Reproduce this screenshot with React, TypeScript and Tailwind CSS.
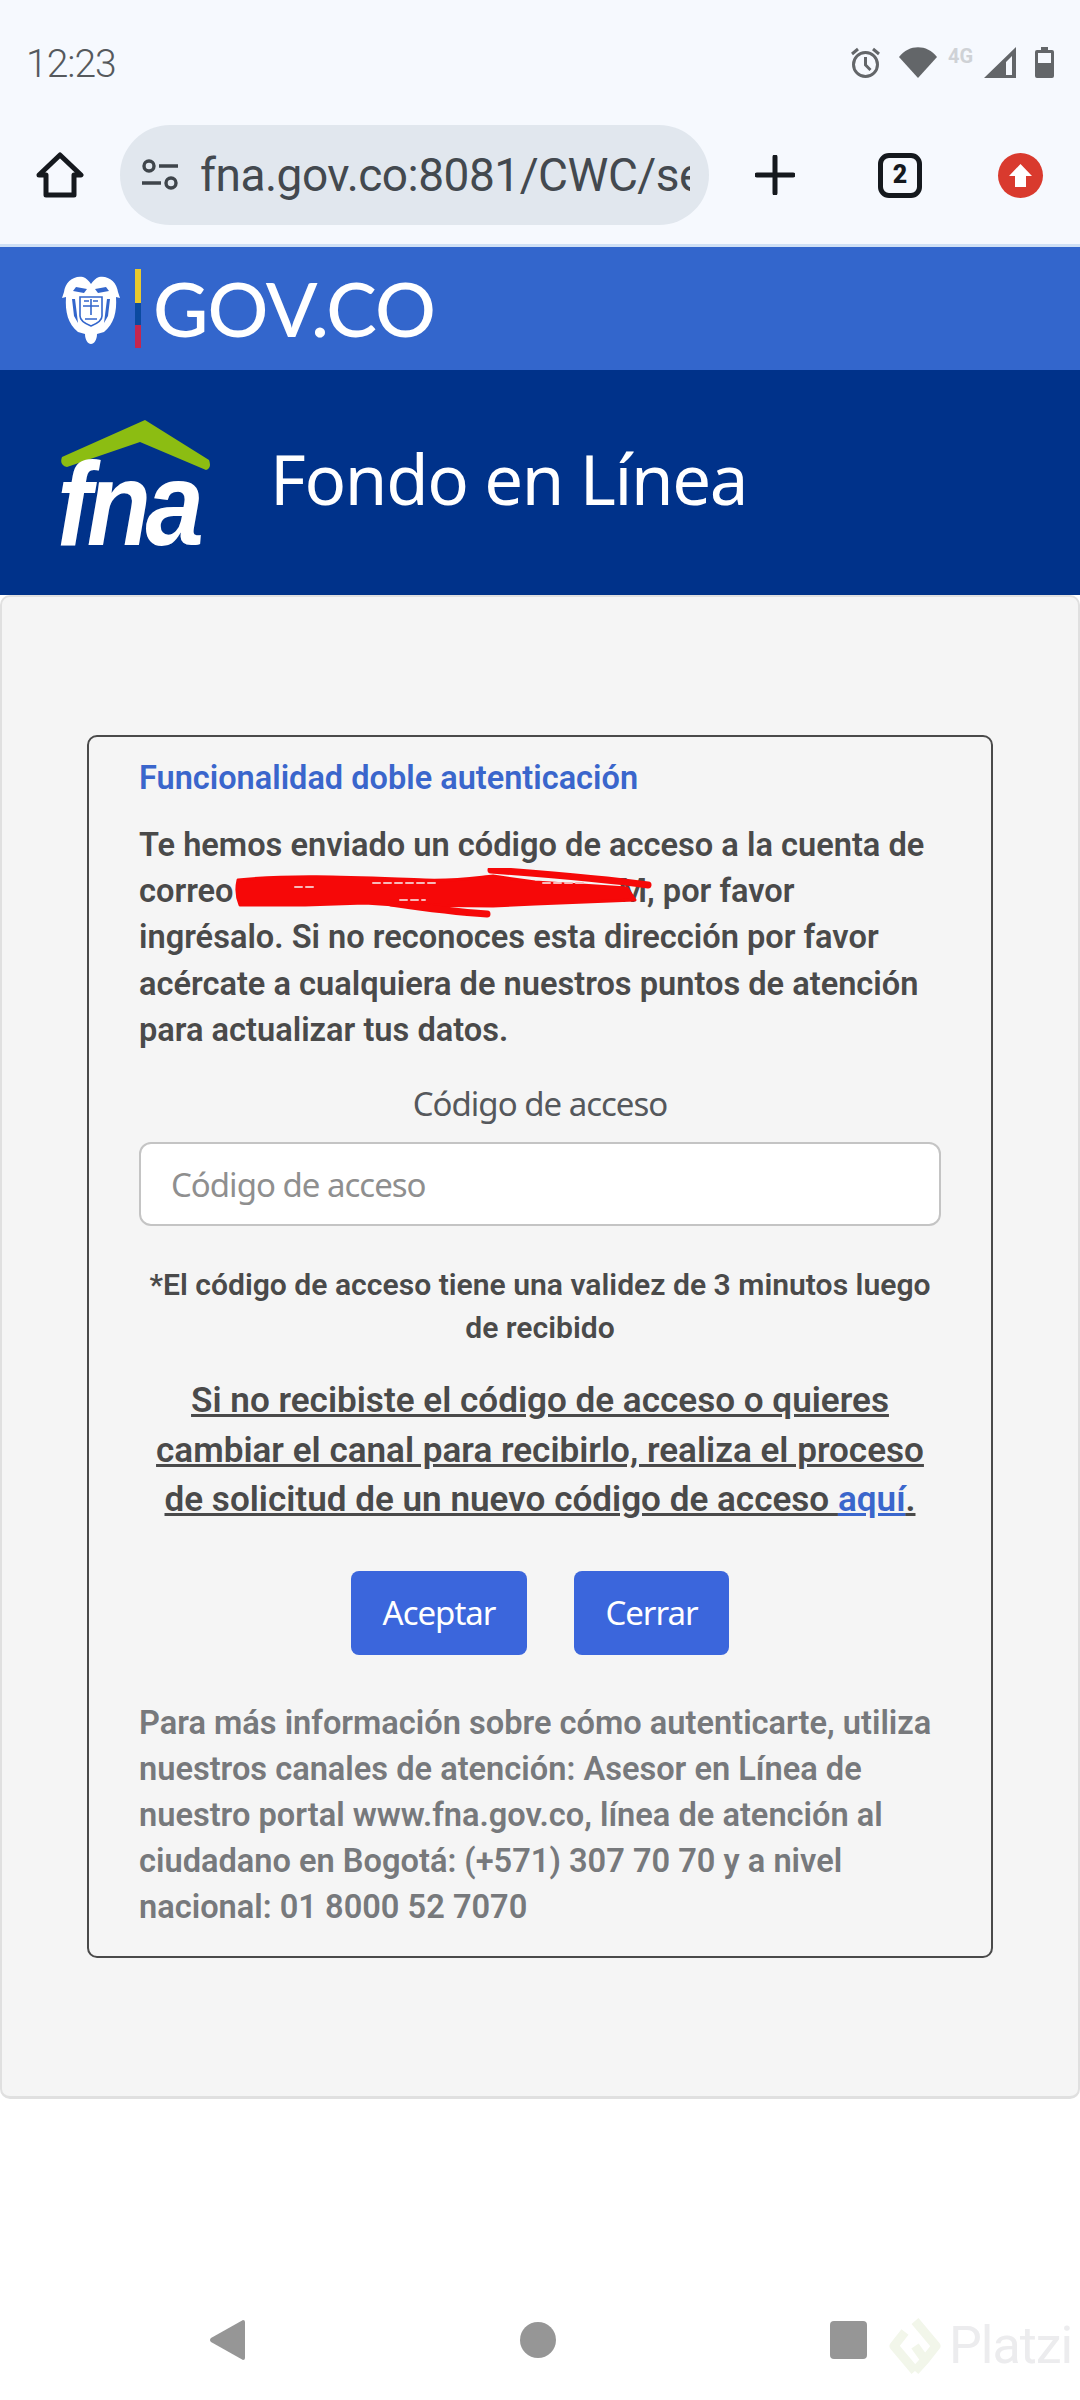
import React from "react";

const roboto = "[font-family:Roboto,sans-serif]";
const noto = "[font-family:'Noto_Sans',sans-serif]";

function StatusIcons() {
  return (
    <div className="flex items-start">
      {/* alarm */}
      <svg width="31" height="31" viewBox="0 0 31 31" fill="none" stroke="#636669" className="mr-[18px]">
        <circle cx="15.5" cy="17.5" r="12" strokeWidth="3" />
        <path d="M15.5 10v8l5 5M2 7l6-5M29 7l-6-5" strokeWidth="3" />
      </svg>
      {/* wifi */}
      <svg width="38" height="31" viewBox="0 0 38 31" className="mr-[11px]">
        <path d="M0 10C10 -3 28 -3 38 10L19 31Z" fill="#636669" />
      </svg>
      <span className={`${roboto} mr-[6px] -mt-[3px] w-[30px] text-[20px] font-bold leading-[24px] text-[#cfd2d6]`}>4G</span>
      {/* signal */}
      <svg width="32" height="31" viewBox="0 0 32 31" className="mr-[19px]">
        <path fillRule="evenodd" d="M32 0V31H0ZM28 9 22 15V28H28Z" fill="#636669" />
      </svg>
      {/* battery */}
      <svg width="19" height="31" viewBox="0 0 19 31">
        <path fillRule="evenodd" d="M6 0H13V3H17Q19 3 19 5V29Q19 31 17 31H2Q0 31 0 29V5Q0 3 2 3H6ZM3 6V16H16V6Z" fill="#636669" />
      </svg>
    </div>
  );
}

function BrowserBar() {
  return (
    <div className="flex h-[82px] items-center pl-[36px]">
      <svg width="48" height="46" viewBox="0 0 48 46" fill="none" stroke="#15191e" strokeWidth="5" strokeLinejoin="round" className="mr-[36px] shrink-0">
        <path d="M24 3 45 23H38V43H10V23H3Z" />
      </svg>
      <div className="mr-[46px] flex h-[100px] w-[589px] shrink-0 items-center rounded-full bg-[#e1e7ee] pl-[21px]">
        <svg width="38" height="32" viewBox="0 0 38 32" fill="none" stroke="#3f454b" strokeWidth="3.4" className="mr-[21px] shrink-0">
          <circle cx="8" cy="7" r="5" />
          <path d="M18 7H37M1 24H20" />
          <circle cx="30" cy="24" r="5" />
        </svg>
        <div className={`${roboto} w-[490px] overflow-hidden whitespace-nowrap text-[46px] leading-[60px] tracking-[-0.5px] text-[#43494f]`}>
          fna.gov.co:8081/CWC/seguridad
        </div>
      </div>
      <svg width="40" height="40" viewBox="0 0 40 40" stroke="#15191e" strokeWidth="5" strokeLinecap="round" className="mr-[83px] shrink-0">
        <path d="M20 2V38M2 20H38" />
      </svg>
      <div className="mr-[76px] flex h-[45px] w-[44px] shrink-0 items-center justify-center rounded-[11px] border-[5px] border-[#15191e] [font-family:Roboto,sans-serif] text-[25px] font-black text-[#15191e]">
        2
      </div>
      <div className="flex h-[45px] w-[45px] shrink-0 items-center justify-center rounded-full bg-[#d93a2e]">
        <svg width="25" height="25" viewBox="0 0 25 25">
          <path d="M12.5 1 24 13H18V24H7V13H1Z" fill="#fff" />
        </svg>
      </div>
    </div>
  );
}

function GovLogo() {
  return (
    <div className="flex h-[123px] items-center bg-[#3366cc] pl-[62px]">
      {/* escudo */}
      <svg width="58" height="70" viewBox="0 0 58 70" className="mr-[15px] shrink-0">
        <path d="M2 18C3 8 12 1 21 3C24 4 27 7 29 10C31 7 34 4 37 3C46 1 55 8 56 18L58 24L54 23C55 38 52 50 42 58L35 60C35 66 32 70 29 70C26 70 23 66 23 60L16 58C6 50 3 38 4 23L0 24Z" fill="#fff" />
        <path d="M14 13 25 15 22 19 11 17ZM44 13 33 15 36 19 47 17Z" fill="#3366cc" />
        <path d="M10 25 12 42 16 49 13 25ZM48 25 46 42 42 49 45 25Z" fill="#3366cc" />
        <path d="M18 23H40V42C40 47 34 50 29 52C24 50 18 47 18 42Z" fill="none" stroke="#3366cc" strokeWidth="1.6" />
        <path d="M21 32H37M29 25V41M23 45H35M22 27H27M31 27H36" stroke="#3366cc" strokeWidth="1.6" />
      </svg>
      <div className="mr-[13px] flex h-[79px] w-[6px] shrink-0 flex-col">
        <div className="h-[34px] bg-[#e8c92e]" />
        <div className="h-[22px] bg-[#0b4aa0]" />
        <div className="h-[23px] bg-[#c4264f]" />
      </div>
      <span className="-ml-[1px] -mt-[2px] [font-family:Lato,sans-serif] text-[76px] font-medium leading-none tracking-[-1px] text-white">GOV.CO</span>
    </div>
  );
}

function FnaHeader() {
  return (
    <div className="flex h-[225px] items-center bg-[#00328a] pl-[60px]">
      <div className="relative mr-[60px] mt-[50px] h-[130px] w-[150px] shrink-0 self-start">
        <svg width="150" height="52" viewBox="0 0 150 52" className="absolute left-0 top-0">
          <path d="M2 37 85 0 149 40Q152 48 146 50L80 22 7 47Q-1 45 2 37Z" fill="#8cbd12" />
        </svg>
        <span className="absolute left-[-3px] top-[24px] origin-left scale-x-[0.89] [font-family:'Liberation_Sans',sans-serif] text-[118px] font-bold italic leading-[120px] tracking-[-6px] text-white">fna</span>
      </div>
      <h1 className={`${noto} -mt-[8px] text-[69px] font-normal leading-none tracking-[-1.35px] text-white`}>Fondo en Línea</h1>
    </div>
  );
}

function RedScribble() {
  return (
    <svg width="420" height="50" viewBox="0 0 420 50" className="absolute left-[96px] top-[-4px]" fill="#f60808" stroke="#f60808" strokeWidth="3" strokeLinejoin="round" strokeLinecap="round">
      <path d="M3 12C60 6 130 10 190 12C225 13 245 9 258 8L300 14L392 20L400 32L300 36L258 38L160 37L130 35L70 37L5 37Q0 25 3 12Z" />
      <path d="M256 2C310 6 370 11 413 17" fill="none" strokeWidth="7" />
      <path d="M156 35C190 40 220 44 252 46" fill="none" strokeWidth="7" />
      <path d="M60 19H80M138 15H200M165 32H190M308 15H350" fill="none" stroke="#f7b9b9" strokeWidth="2" strokeDasharray="7 4" />
    </svg>
  );
}

function AuthCard() {
  return (
    <div className={`${roboto} rounded-[10px] border-2 border-[#4a4a4a] bg-[#f5f5f5] px-[50px] pb-[26px] pt-[21px]`}>
      <h2 className="text-[32.5px] font-semibold leading-[40px] text-[#3a66cc]">Funcionalidad doble autenticación</h2>
      <p className="mt-[24px] text-[32.6px] font-semibold leading-[46.2px] text-[#4a4a4a]">
        Te hemos enviado un código de acceso a la cuenta de{" "}
        <span className="relative">
          correo
          <span className="inline-block w-[385px]" />
          M
          <RedScribble />
        </span>
        , por favor ingrésalo. Si no reconoces esta dirección por favor acércate a cualquiera de nuestros puntos de atención para actualizar tus datos.
      </p>
      <label className={`${noto} mt-[31px] block text-center text-[33px] leading-[40px] tracking-[-1px] text-[#55585c]`}>Código de acceso</label>
      <input
        placeholder="Código de acceso"
        className={`${noto} mt-[18px] block h-[84px] w-full rounded-[12px] border-2 border-[#c4c4c4] bg-white pl-[30px] pr-[31px] text-[33px] tracking-[-1px] text-[#555] placeholder:text-[#8f8f8f]`}
      />
      <p className="mt-[37px] text-center text-[30.1px] font-semibold leading-[43px] text-[#4a4a4a]">
        *El código de acceso tiene una validez de 3 minutos luego de recibido
      </p>
      <p className="mt-[27px] text-center text-[35.1px] font-semibold leading-[49.5px] text-[#4a4a4a] underline">
        Si no recibiste el código de acceso o quieres cambiar el canal para recibirlo, realiza el proceso de solicitud de un nuevo código de acceso <a className="text-[#3a66cc]">aquí</a>.
      </p>
      <div className="mt-[46px] flex justify-center gap-[47px]">
        <button className={`${noto} h-[84px] w-[176px] rounded-[8px] bg-[#3b66dc] text-[33px] tracking-[-1px] text-white`}>Aceptar</button>
        <button className={`${noto} h-[84px] w-[155px] rounded-[8px] bg-[#3b66dc] text-[33px] tracking-[-1px] text-white`}>Cerrar</button>
      </div>
      <p className="mt-[45px] text-[32.6px] font-semibold leading-[46px] text-[#77797c]">
        Para más información sobre cómo autenticarte, utiliza nuestros canales de atención: Asesor en Línea de nuestro portal www.fna.gov.co, línea de atención al ciudadano en Bogotá: (+571) 307 70 70 y a nivel nacional: 01 8000 52 7070
      </p>
    </div>
  );
}

function NavBar() {
  return (
    <div className="relative mb-[20px] mt-auto flex h-[80px] items-center justify-between pl-[210px] pr-[213px]">
      <svg width="35" height="40" viewBox="0 0 35 40">
        <path d="M33 0 Q35 0 35 2V38Q35 40 33 40L1 22Q-1 20 1 18Z" fill="#969696" />
      </svg>
      <div className="h-[36px] w-[36px] rounded-full bg-[#969696]" />
      <div className="h-[38px] w-[37px] rounded-[4px] bg-[#969696]" />
      {/* marca de agua */}
      <div className="absolute left-[889px] top-[16px] flex items-center">
        <svg width="52" height="60" viewBox="0 0 52 60" fill="none" stroke="#f2f6ea" strokeWidth="9" strokeLinejoin="round">
          <path d="M26 5 47 30 36 44M26 55 5 30 16 16M26 55 36 44 26 30" />
        </svg>
        <span className={`${roboto} ml-[8px] text-[52px] font-normal leading-none tracking-[-1px] text-[#ececee]`}>Platzi</span>
      </div>
    </div>
  );
}

export default function App() {
  return (
    <div className="flex h-[2400px] w-[1080px] flex-col overflow-hidden bg-white">
      <div className="h-[244px] bg-[#f6f9fe]">
        <div className="flex h-[134px] items-start justify-between pl-[26px] pr-[26px] pt-[47px]">
          <span className={`${roboto} text-[39px] font-light leading-[34px] tracking-[-1px] text-[#55595d]`}>12:23</span>
          <StatusIcons />
        </div>
        <BrowserBar />
      </div>
      <div className="h-[3px] bg-[#cfe0f5]" />
      <GovLogo />
      <FnaHeader />
      <main className="rounded-[10px] border-2 border-b-[3px] border-[#e0e0e0] bg-[#f5f5f5] px-[85px] pb-[138px] pt-[138px]">
        <AuthCard />
      </main>
      <NavBar />
    </div>
  );
}
